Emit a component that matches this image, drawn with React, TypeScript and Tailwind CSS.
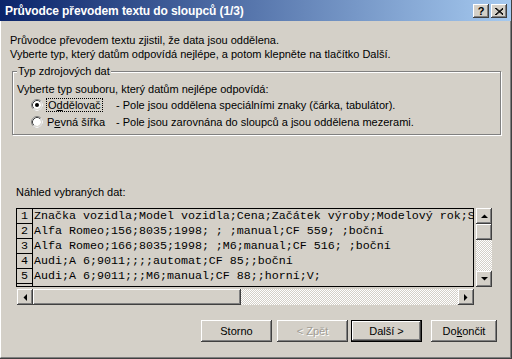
import React from "react";

const ROWS = [
  "Značka vozidla;Model vozidla;Cena;Začátek výroby;Modelový rok;Spotřeba;Objem",
  "Alfa Romeo;156;8035;1998; ; ;manual;CF 559; ;boční",
  "Alfa Romeo;166;8035;1998; ;M6;manual;CF 516; ;boční",
  "Audi;A 6;9011;;;;automat;CF 85;;boční",
  "Audi;A 6;9011;;;M6;manual;CF 88;;horní;V;",
];

const raised =
  "shadow-[inset_-1px_-1px_#404040,inset_1px_1px_#ffffff,inset_-2px_-2px_#808080]";

function Radio({ checked }: { checked?: boolean }) {
  return (
    <svg width="12" height="12" viewBox="0 0 12 12" className="shrink-0">
      <circle cx="6" cy="6" r="5.5" fill="#ffffff" stroke="#808080" />
      <path d="M2.11 9.89 A5.5 5.5 0 0 0 9.89 2.11" fill="none" stroke="#ffffff" />
      <path d="M2.82 9.18 A4.5 4.5 0 0 1 9.18 2.82" fill="none" stroke="#404040" />
      <path d="M3.2 9.5 A4.5 4.5 0 0 0 9.5 3.2" fill="none" stroke="#d4d0c8" />
      {checked && <circle cx="6" cy="6" r="2" fill="#000000" />}
    </svg>
  );
}

function Arrow({ dir }: { dir: "up" | "down" | "left" | "right" }) {
  const pts: Record<string, string> = {
    up: "0,4 7,4 3.5,0.5",
    down: "0,0 7,0 3.5,3.5",
    left: "4,0 4,7 0.5,3.5",
    right: "0,0 0,7 3.5,3.5",
  };
  const vertical = dir === "up" || dir === "down";
  return (
    <div
      className={`w-[16px] h-[16px] bg-[#d4d0c8] flex items-center justify-center shrink-0 ${raised}`}
    >
      <svg width={vertical ? 7 : 4} height={vertical ? 4 : 7}>
        <polygon points={pts[dir]} fill="#000000" />
      </svg>
    </div>
  );
}

function Button({
  label,
  width,
  disabled,
  isDefault,
}: {
  label: React.ReactNode;
  width: string;
  disabled?: boolean;
  isDefault?: boolean;
}) {
  return (
    <div
      className={`${width} h-[22px] flex items-center justify-center bg-[#d4d0c8] ${
        isDefault
          ? "shadow-[inset_0_0_0_1px_#000000,inset_-2px_-2px_#404040,inset_2px_2px_#ffffff,inset_-3px_-3px_#808080]"
          : raised
      } ${disabled ? "text-[#a09c94] [text-shadow:1px_1px_#ffffff]" : "text-black"}`}
    >
      {label}
    </div>
  );
}

export default function App() {
  return (
    <div className="w-[512px] h-[359px] bg-[#d4d0c8] flex flex-col overflow-hidden font-['Liberation_Sans',Arial,sans-serif] text-[11px] text-black border-r border-b border-[#404040]">
      {/* title bar */}
      <div className="h-[21px] shrink-0 flex items-center justify-between pl-[5px] pr-[4px] bg-[linear-gradient(to_right,#0a246a,#a6caf0)]">
        <span className="text-white font-bold text-[12px] tracking-[-0.1px]">
          Průvodce převodem textu do sloupců (1/3)
        </span>
        <div className="flex gap-[2px] mt-[1px]">
          <div className={`w-[16px] h-[14px] bg-[#d4d0c8] flex items-center justify-center font-bold text-[11px] leading-none ${raised}`}>
            ?
          </div>
          <div className={`w-[16px] h-[14px] bg-[#d4d0c8] flex items-center justify-center ${raised}`}>
            <svg width="8" height="7" viewBox="0 0 8 7">
              <path d="M0 0 L8 7 M1 0 L8 6 M0 7 L8 0 M1 7 L8 1" stroke="#000000" strokeWidth="1" />
            </svg>
          </div>
        </div>
      </div>

      <div className="flex-1 flex flex-col border-l border-white border-r border-r-[#808080] border-b border-b-[#808080]">
        {/* intro */}
        <div className="mt-[12px] pl-[9px] leading-[14px]">
          <div>Průvodce převodem textu zjistil, že data jsou oddělena.</div>
          <div>Vyberte typ, který datům odpovídá nejlépe, a potom klepněte na tlačítko Další.</div>
        </div>

        {/* group box */}
        <div className="relative mt-[10px] ml-[11px] mr-[9px] h-[64px] border border-[#808080] shadow-[1px_1px_0_#ffffff,inset_1px_1px_0_#ffffff]">
          <span className="absolute -top-[8px] left-[4px] px-[1px] bg-[#d4d0c8] leading-[14px]">
            Typ zdrojových dat
          </span>
          <div className="pl-[4px] pt-[10px] leading-[14px]">
            Vyberte typ souboru, který datům nejlépe odpovídá:
          </div>
          <div className="flex flex-col gap-[3px] mt-[2px] pl-[18px]">
            <div className="flex items-center h-[14px]">
              <Radio checked />
              <span className="ml-[3px] w-[70px]">
                <span className="border border-dotted border-black px-[1px]">
                  O<span className="underline">d</span>dělovač
                </span>
              </span>
              <span>- Pole jsou oddělena speciálními znaky (čárka, tabulátor).</span>
            </div>
            <div className="flex items-center h-[14px]">
              <Radio />
              <span className="ml-[4px] w-[69px]">
                P<span className="underline">e</span>vná šířka
              </span>
              <span>- Pole jsou zarovnána do sloupců a jsou oddělena mezerami.</span>
            </div>
          </div>
        </div>

        {/* preview */}
        <div className="mt-[50px] pl-[15px] leading-[14px]">Náhled vybraných dat:</div>
        <div className="mt-[9px] ml-[15px] flex">
          <div className="w-[458px] h-[79px] border border-black overflow-hidden font-['Liberation_Mono','Courier_New',monospace] text-[11.67px] leading-[15px]">
            {ROWS.concat([""]).map((row, i) => (
              <div key={i} className="flex h-[15px]">
                <div className="w-[16px] shrink-0 border-r border-b border-black text-center">
                  {row ? i + 1 : ""}
                </div>
                <div className="whitespace-pre pl-px">{row}</div>
              </div>
            ))}
          </div>
          <div className="ml-[2px] w-[16px] h-[79px] flex flex-col bg-[repeating-conic-gradient(#d4d0c8_0%_25%,#ffffff_0%_50%)] bg-[length:2px_2px]">
            <Arrow dir="up" />
            <div className={`h-[16px] bg-[#d4d0c8] ${raised}`} />
            <div className="flex-1" />
            <Arrow dir="down" />
          </div>
        </div>
        <div className="mt-[2px] ml-[16px] w-[457px] h-[16px] flex bg-[repeating-conic-gradient(#d4d0c8_0%_25%,#ffffff_0%_50%)] bg-[length:2px_2px]">
          <Arrow dir="left" />
          <div className={`w-[208px] bg-[#d4d0c8] ${raised}`} />
          <div className="flex-1" />
          <Arrow dir="right" />
        </div>

        {/* buttons */}
        <div className="mt-[15px] flex pl-[200px]">
          <Button label="Storno" width="w-[71px]" />
          <div className="ml-[5px]">
            <Button label="< Zpět" width="w-[71px]" disabled />
          </div>
          <div className="ml-[3px]">
            <Button label="Další >" width="w-[71px]" isDefault />
          </div>
          <div className="ml-[9px]">
            <Button
              label={
                <>
                  Do<span className="underline">k</span>ončit
                </>
              }
              width="w-[66px]"
            />
          </div>
        </div>
      </div>
    </div>
  );
}
